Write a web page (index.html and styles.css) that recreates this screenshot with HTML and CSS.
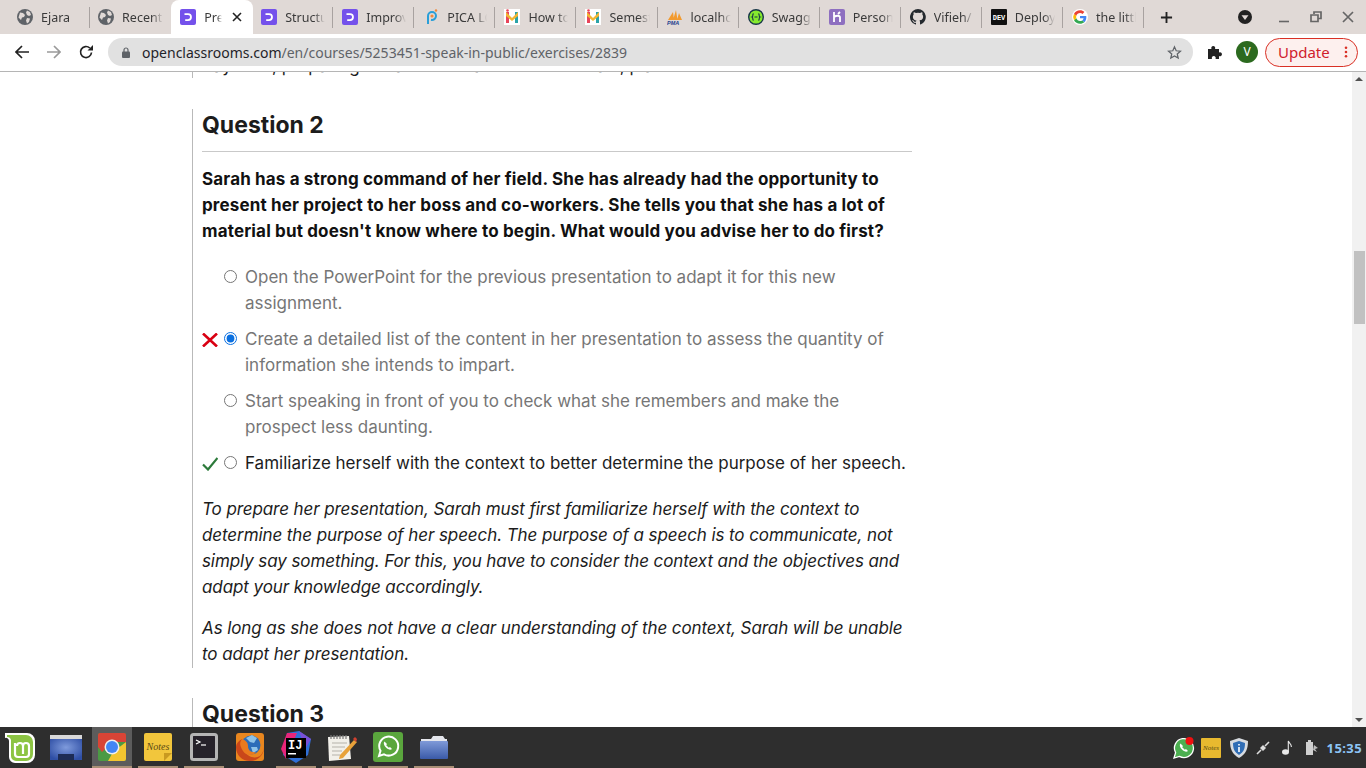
FILE: index.html
```html
<!DOCTYPE html>
<html lang="en">
<head>
    <meta charset="UTF-8" />
    <title>Speak in public - Exercises</title>
    <link rel="stylesheet" href="styles.css">
</head>
<body>
<svg class="sprite" width="0" height="0">
    <defs>
        <radialGradient id="desk-blue" cx="50%" cy="40%" r="65%">
            <stop offset="0" stop-color="#7f9bdc"/>
            <stop offset="1" stop-color="#2f4fa5"/>
        </radialGradient>
        <linearGradient id="folder-blue" x1="0" y1="0" x2="0" y2="1">
            <stop offset="0" stop-color="#7f9ad8"/>
            <stop offset="1" stop-color="#3a5aa8"/>
        </linearGradient>
    </defs>
    <symbol id="globe" viewBox="0 0 16 16">
        <circle cx="8" cy="8" r="8" fill="#5f6368"/>
        <path d="M3 3.500l3 .5 2 2-1 2-2 .5-1 2.500L1.500 8.500zM10 1.500l3 1.500 1 3-2 1-2-1-1-2.500zM10 9l3 .5-1 3.500-2 1.500-1-3z" fill="#e0d9d6"/>
    </symbol>
    <symbol id="oc" viewBox="0 0 16 16">
        <rect width="16" height="16" rx="2" fill="#7451eb"/>
        <path d="M4.500 4.200H8a3.900 3.900 0 0 1 0 7.800H5.200v-1.800H8a2.100 2.100 0 0 0 0-4.200H4.500z" fill="#fff"/>
    </symbol>
    <symbol id="mint" viewBox="0 0 16 16">
        <rect width="16" height="16" fill="#fff"/>
        <path d="M2 3v11h3V3z" fill="#e8445a"/>
        <path d="M11 3v11h3V3z" fill="#2aa3a8"/>
        <path d="M2 3l6 6 6-6v4l-6 5-6-5z" fill="#f2b632"/>
        <circle cx="3.500" cy="1.500" r="1.300" fill="#e8445a"/>
    </symbol>
</svg>

<header class="tab-strip">
    <div class="tab"><svg class="fav"><use href="#globe"/></svg><span class="tab-title">Ejara</span></div>
    <div class="tab"><svg class="fav"><use href="#globe"/></svg><span class="tab-title">Recent</span></div>
    <div class="tab active"><svg class="fav"><use href="#oc"/></svg><span class="tab-title">Pre</span>
        <svg class="tab-close" viewBox="0 0 10 10"><path d="M1 1l8 8M9 1l-8 8" stroke="#222" stroke-width="1.600"/></svg>
    </div>
    <div class="tab"><svg class="fav"><use href="#oc"/></svg><span class="tab-title">Structu</span></div>
    <div class="tab"><svg class="fav"><use href="#oc"/></svg><span class="tab-title">Improv</span></div>
    <div class="tab">
        <svg class="fav" viewBox="0 0 16 16"><path d="M5 15V7a4 4 0 0 1 8 0 4 4 0 0 1-5 3.800" fill="none" stroke="#2a9fd8" stroke-width="2"/><circle cx="9" cy="7" r="1.600" fill="#f08a3c"/><circle cx="13" cy="1.500" r="1.200" fill="#f08a3c"/></svg>
        <span class="tab-title">PICA LC</span>
    </div>
    <div class="tab"><svg class="fav"><use href="#mint"/></svg><span class="tab-title">How to</span></div>
    <div class="tab"><svg class="fav"><use href="#mint"/></svg><span class="tab-title">Semest</span></div>
    <div class="tab">
        <svg class="fav" viewBox="0 0 16 16"><path d="M1 11L6 3l1 8zM6 11l3-10 1.500 10zM10 11l2-7 3 7z" fill="#f29a2e"/><text x="0" y="15.500" class="pma">PMA</text></svg>
        <span class="tab-title">localhc</span>
    </div>
    <div class="tab">
        <svg class="fav" viewBox="0 0 16 16"><circle cx="8" cy="8" r="7.300" fill="#85ea2d" stroke="#173647" stroke-width="1.400"/><path d="M5.500 4.500C4 6 5.500 7.500 4 8c1.500.5 0 2 1.500 3.500M10.500 4.500C12 6 10.500 7.500 12 8c-1.500.5 0 2-1.500 3.500M6.500 8h3" fill="none" stroke="#173647" stroke-width="1.100"/></svg>
        <span class="tab-title">Swagg</span>
    </div>
    <div class="tab">
        <svg class="fav" viewBox="0 0 16 16"><rect width="16" height="16" rx="2" fill="#8e6fc0"/><path d="M5 3v10M5 8c2-1.500 6-2 6 .5V13M11 3L9 5" fill="none" stroke="#fff" stroke-width="1.800"/></svg>
        <span class="tab-title">Person</span>
    </div>
    <div class="tab">
        <svg class="fav" viewBox="0 0 16 16"><path d="M8 0a8 8 0 0 0-2.500 15.600c.4.100.5-.2.500-.4v-1.400c-2.200.5-2.700-1-2.700-1-.4-.9-.9-1.200-.9-1.200-.7-.5.100-.5.100-.5.800.100 1.200.8 1.200.8.700 1.200 1.900.9 2.300.7.100-.5.300-.9.500-1.100-1.800-.2-3.600-.9-3.600-4 0-.9.300-1.600.8-2.100-.1-.2-.4-1 .1-2.100 0 0 .7-.2 2.200.8a7.600 7.600 0 0 1 4 0c1.500-1 2.200-.8 2.200-.8.400 1.100.2 1.900.1 2.100.5.600.8 1.300.8 2.100 0 3.100-1.900 3.700-3.700 3.900.3.300.6.700.6 1.500v2.200c0 .2.100.5.600.4A8 8 0 0 0 8 0z" fill="#24292e"/></svg>
        <span class="tab-title">Vifieh/</span>
    </div>
    <div class="tab">
        <svg class="fav" viewBox="0 0 16 16"><rect width="16" height="16" rx="1" fill="#111"/><text x="8" y="11" class="dev">DEV</text></svg>
        <span class="tab-title">Deploy</span>
    </div>
    <div class="tab">
        <svg class="fav" viewBox="0 0 48 48"><circle cx="24" cy="24" r="24" fill="#fff"/><path d="M43 24.500c0-1.400-.1-2.500-.3-3.500H24v7h10.800c-.5 2.700-2 4.800-4.300 6.300l6.700 5.200C41.100 36 43 30.800 43 24.500z" fill="#4285f4"/><path d="M24 44c5.400 0 9.900-1.800 13.200-4.500l-6.700-5.200c-1.800 1.200-4 1.900-6.500 1.900-5.100 0-9.400-3.400-11-8.100l-6.900 5.300C9.400 39.500 16.200 44 24 44z" fill="#34a853"/><path d="M13 28.100a12 12 0 0 1 0-8.200l-6.900-5.300a20 20 0 0 0 0 18.800z" fill="#fbbc05"/><path d="M24 11.800c2.900 0 5.500 1 7.500 3l5.700-5.700C33.900 6.100 29.400 4 24 4 16.200 4 9.400 8.500 6.100 14.600l6.900 5.300c1.600-4.700 5.900-8.100 11-8.100z" fill="#ea4335"/></svg>
        <span class="tab-title">the littl</span>
    </div>
    <svg class="new-tab" viewBox="0 0 14 14"><path d="M7 1v12M1 7h12" stroke="#222" stroke-width="2"/></svg>
    <div class="window-controls">
        <svg class="profile-menu" viewBox="0 0 14 14"><circle cx="7" cy="7" r="7" fill="#222"/><path d="M3.500 5.200h7L7 10z" fill="#e0d9d6"/></svg>
        <svg class="win-btn" viewBox="0 0 12 12"><path d="M1 10.500h10" stroke="#666" stroke-width="1.600"/></svg>
        <svg class="win-btn" viewBox="0 0 12 12"><path d="M4 3V1h7v6.500H8.500M1 4h7v6.500H1z" fill="none" stroke="#666" stroke-width="1.700"/></svg>
        <svg class="win-btn" viewBox="0 0 12 12"><path d="M1 1l10 10M11 1L1 11" stroke="#666" stroke-width="1.700"/></svg>
    </div>
</header>

<nav class="toolbar">
    <svg class="nav-icon" viewBox="0 0 14 14"><path d="M14 7H1.500M7 1L1 7l6 6" fill="none" stroke="#222" stroke-width="1.700"/></svg>
    <svg class="nav-icon" viewBox="0 0 14 14"><path d="M0 7h12.500M7 1l6 6-6 6" fill="none" stroke="#9a9a9a" stroke-width="1.700"/></svg>
    <svg class="nav-icon" viewBox="0 0 14 14"><path d="M12.500 7.500A5.500 5.500 0 1 1 10.800 3" fill="none" stroke="#222" stroke-width="1.700"/><path d="M8.500 5.500H14V0z" fill="#222"/></svg>
    <div class="omnibox">
        <svg class="lock" viewBox="0 0 8 11"><path d="M2 5V3a2 2 0 0 1 4 0v2" fill="none" stroke="#5f6368" stroke-width="1.200"/><rect y="4.500" width="8" height="6.500" rx="1" fill="#5f6368"/></svg>
        <span class="url"><span class="host">openclassrooms.com</span>/en/courses/5253451-speak-in-public/exercises/2839</span>
        <svg class="star" viewBox="0 0 24 24"><path d="M12 3l2.700 6.200 6.800.6-5.100 4.500 1.500 6.600L12 17.400l-5.900 3.500 1.500-6.600L2.500 9.800l6.800-.6z" fill="none" stroke="#5f6368" stroke-width="2"/></svg>
    </div>
    <svg class="puzzle" viewBox="0 0 14 14"><path d="M0 4h3.500a2 2 0 1 1 3.500 0h4v3.500a2 2 0 1 1 0 3.500V14H7.500a2 2 0 1 0-3.500 0H0z" fill="#222"/></svg>
    <div class="avatar">V</div>
    <div class="update">
        <span class="update-label">Update</span>
        <svg class="update-dots" viewBox="0 0 4 14"><circle cx="2" cy="2" r="1.500"/><circle cx="2" cy="7" r="1.500"/><circle cx="2" cy="12" r="1.500"/></svg>
    </div>
</nav>

<div class="viewport">
    <main class="content">
        <div class="prev-line">
            <span>Say then, preparing the audience and the whole talk, plan.</span>
        </div>

        <section class="question">
            <h2>Question 2</h2>
            <p class="statement">Sarah has a strong command of her field. She has already had the opportunity to present her project to her boss and co-workers. She tells you that she has a lot of material but doesn't know where to begin. What would you advise her to do first?</p>

            <div class="options">
                <label class="option">
                    <span class="mark"></span>
                    <input type="radio" name="q2">
                    <span>Open the PowerPoint for the previous presentation to adapt it for this new assignment.</span>
                </label>
                <label class="option">
                    <span class="mark"><svg viewBox="0 0 16 14"><path d="M1 .5l14 13M15 .5l-14 13" stroke="#d90012" stroke-width="2.600"/></svg></span>
                    <input type="radio" name="q2" class="picked" checked>
                    <span>Create a detailed list of the content in her presentation to assess the quantity of information she intends to impart.</span>
                </label>
                <label class="option">
                    <span class="mark"></span>
                    <input type="radio" name="q2">
                    <span>Start speaking in front of you to check what she remembers and make the prospect less daunting.</span>
                </label>
                <label class="option correct">
                    <span class="mark"><svg viewBox="0 0 16 14"><path d="M1 7.500l5 5L15.500 1" fill="none" stroke="#2c7a3a" stroke-width="2.200"/></svg></span>
                    <input type="radio" name="q2">
                    <span>Familiarize herself with the context to better determine the purpose of her speech.</span>
                </label>
            </div>

            <div class="explanation">
                <p>To prepare her presentation, Sarah must first familiarize herself with the context to determine the purpose of her speech. The purpose of a speech is to communicate, not simply say something. For this, you have to consider the context and the objectives and adapt your knowledge accordingly.</p>
                <p>As long as she does not have a clear understanding of the context, Sarah will be unable to adapt her presentation.</p>
            </div>
        </section>

        <section class="question">
            <h2>Question 3</h2>
        </section>
    </main>

    <aside class="scrollbar">
        <span class="arrow up"></span>
        <span class="thumb"></span>
        <span class="arrow down"></span>
    </aside>
</div>

<footer class="taskbar">
    <svg class="menu-logo" viewBox="0 0 32 32">
        <path d="M1 1h22a8 8 0 0 1 8 8v14a8 8 0 0 1-8 8H11a6 6 0 0 1-6-6V9a3 3 0 0 0-4-3z" fill="#fff"/>
        <path d="M3 3h19a7 7 0 0 1 7 7v12a7 7 0 0 1-7 7H12a5 5 0 0 1-5-5V8a4 4 0 0 0-4-3z" fill="#8cc443"/>
        <path d="M11 11v11a3 3 0 0 0 3 3h8a3 3 0 0 0 3-3v-8a3 3 0 0 0-6 0v8M19 14a3 3 0 0 0-6 0" fill="none" stroke="#fff" stroke-width="2.200"/>
    </svg>
    <div class="launcher">
        <div class="launch">
            <svg class="wide" viewBox="0 0 32 28"><rect y="2" width="32" height="4" fill="#d8d8d8"/><rect y="6" width="32" height="21" fill="url(#desk-blue)"/><rect x="8" y="21" width="16" height="6" fill="#1d2c55"/></svg>
        </div>
        <div class="launch open current">
            <svg viewBox="0 0 28 28"><rect width="28" height="28" rx="2" fill="#4b9a44"/><path d="M28 4v22a2 2 0 0 1-2 2H10l5-9 13-10z" fill="#f2c530"/><path d="M0 2a2 2 0 0 1 2-2h24a2 2 0 0 1 2 2v7H14L4 19 0 14z" fill="#d94436"/><circle cx="14" cy="14" r="7.500" fill="#eee"/><circle cx="14" cy="14" r="6" fill="#4285f4"/></svg>
        </div>
        <div class="launch open">
            <svg viewBox="0 0 28 28"><rect width="28" height="28" rx="2" fill="#f2c63c"/><path d="M20 28l8-8h-8z" fill="#c99a20"/><text x="14" y="17" class="note-text">Notes</text></svg>
        </div>
        <div class="launch open">
            <svg viewBox="0 0 28 28"><rect x="1.500" y="1.500" width="25" height="25" rx="2" fill="#26222a" stroke="#b5b5b5" stroke-width="3"/><path d="M6 7l4 2-4 2" fill="none" stroke="#fff" stroke-width="1.200"/><path d="M11 12h5" stroke="#fff" stroke-width="1.200"/></svg>
        </div>
        <div class="launch">
            <svg viewBox="0 0 28 28"><rect width="28" height="28" rx="3" fill="#e9871f"/><path d="M0 14C0 22 6 28 14 28s14-6 14-14c0 3-2 7-4 9-5 3-13 1-15-5S8 8 6 6C2 8 0 11 0 14z" fill="#c9471a"/><circle cx="15" cy="12" r="9.500" fill="#2b6cb8"/><path d="M10 5l6-3 5 3-3 5-4-1zM15 14l6 0 1 3-5 3z" fill="#8ec3e8"/><path d="M6 6c3 1 6 3 6 7s3 7 8 6c-3 4-10 4-13-1S3 10 6 6z" fill="#ea7a1e"/></svg>
        </div>
        <div class="launch open">
            <svg class="tall" viewBox="0 0 32 32"><path d="M7 2l12-2 12 8-3 16-12 8-13-8z" fill="#2f6fd8"/><path d="M1 18L7 2h10L6 28z" fill="#e8257b"/><path d="M19 0l12 8-6 10z" fill="#7b4fd8"/><rect x="6" y="7" width="20" height="20" fill="#000"/><text x="8" y="18" class="ij-text">IJ</text><rect x="8" y="22" width="8" height="1.500" fill="#fff"/></svg>
        </div>
        <div class="launch open">
            <svg viewBox="0 0 30 28"><path d="M1 4l21-1 2 23-22 2z" fill="#f2f0ea"/><path d="M4 2v4M7 2v4M10 2v4M13 2v4M16 2v4M19 2v4" stroke="#777" stroke-width="1.200"/><path d="M5 10h15M5 14h13M5 18h10M5 22h8" stroke="#b5b2aa"/><path d="M13 22l14-15 3 2-14 16-4 1z" fill="#e8a23a"/><path d="M26 6l2-2 2 2-1 3z" fill="#d0402f"/></svg>
        </div>
        <div class="launch open">
            <svg class="square" viewBox="0 0 30 30"><rect width="30" height="30" rx="3" fill="#5aa63d"/><path d="M6 24l1.500-5.200A9.500 9.500 0 1 1 11 22.300z" fill="none" stroke="#fff" stroke-width="2"/><path d="M11.500 9.500c-1.500 1.500-.5 4 1.500 6s4.500 3 6 1.500l-2-2-1.200.8-2.600-2.600.8-1.200z" fill="#fff"/></svg>
        </div>
        <div class="launch open">
            <svg viewBox="0 0 30 26"><path d="M2 5h10l2-3h10l2 3h2v6H2z" fill="#e4e6ec"/><rect x="1" y="7" width="28" height="18" rx="1" fill="url(#folder-blue)"/></svg>
        </div>
    </div>
    <div class="tray">
        <svg class="tray-wa" viewBox="0 0 22 22"><path d="M1 21l1.600-5.400A9.500 9.500 0 1 1 6.400 19.400z" fill="#4caf50" stroke="#fff" stroke-width="1.300"/><path d="M7.500 6.500c-1.500 1.500-.5 4 1.500 6s4.500 3 6 1.500l-2-2-1.200.8-2.600-2.600.8-1.200z" fill="#fff"/><circle cx="16.500" cy="4" r="4" fill="#f01010"/></svg>
        <svg class="tray-notes" viewBox="0 0 20 20"><rect width="20" height="20" rx="1" fill="#e8b92f"/><text x="10" y="12" class="tray-note-text">Notes</text></svg>
        <svg class="tray-shield" viewBox="0 0 18 20"><path d="M9 0l9 3c0 8-2 13-9 17C2 16 0 11 0 3z" fill="#d7dbe0"/><path d="M9 3l6 2c0 6-1.500 9-6 12-4.500-3-6-6-6-12z" fill="#2f6db5"/><path d="M9 6v1.500M9 9v5" stroke="#fff" stroke-width="1.600"/></svg>
        <svg class="tray-plug" viewBox="0 0 14 14"><path d="M1 13l4-4M9 5l4-4" stroke="#ddd" stroke-width="1.600"/><path d="M4 7l3-3 3 3-3 3z" fill="#ddd"/></svg>
        <svg class="tray-music" viewBox="0 0 10 15"><ellipse cx="3.500" cy="12" rx="3.500" ry="2.800" fill="#e8e8e8"/><path d="M6.300 12V1c.5 2 3.500 3 3 6" fill="none" stroke="#e8e8e8" stroke-width="1.100"/></svg>
        <svg class="tray-battery" viewBox="0 0 14 15"><path d="M2 2h2V0h3v2h2v13H2z" fill="#cfcfcf"/><path d="M10 5l4 3-3 1 2 3-4-2z" fill="#bdbdbd"/></svg>
        <span class="clock">15:35</span>
    </div>
</footer>
</body>
</html>
```

FILE: styles.css
```css
html, body {
    margin: 0;
    height: 100%;
    overflow: hidden;
}

body {
    display: flex;
    flex-direction: column;
    background: #fff;
    color: #1c1c1c;
    font-family: 'Inter', 'Liberation Sans', sans-serif;
}

.sprite {
    position: absolute;
}

/* Browser tabs */
.tab-strip {
    display: flex;
    align-items: center;
    height: 34px;
    padding-left: 9px;
    background: #e0d9d6;
    flex: none;
}

.tab {
    position: relative;
    display: flex;
    align-items: center;
    width: 81.08px;
    height: 34px;
    padding-left: 9px;
    box-sizing: border-box;
    border-right: 1px solid #a8a2a0;
    font-family: 'Noto Sans', sans-serif;
    font-size: 12.500px;
    color: #3a3a3a;
}

.tab:first-child {
    padding-left: 8px;
}

.tab.active {
    width: 82px;
    margin-right: -1px;
    background: #fff;
    border-right: none;
    border-radius: 8px 8px 0 0;
    z-index: 1;
}

.tab:not(.active) {
    border-image: linear-gradient(to bottom, transparent 8px, #a8a2a0 8px, #a8a2a0 27px, transparent 27px) 1;
}

.tab:nth-child(2) {
    padding-left: 8px;
    border-image: none;
    border-right-color: transparent;
}

.fav {
    width: 16px;
    height: 16px;
    flex: none;
    margin-right: 8px;
}

.tab-title {
    white-space: nowrap;
    overflow: hidden;
    flex: 1;
    margin-right: 7px;
    -webkit-mask-image: linear-gradient(to right, #000 72%, transparent 100%);
    mask-image: linear-gradient(to right, #000 72%, transparent 100%);
}

.tab.active .tab-title {
    margin-right: 10px;
}

.tab-close {
    width: 10px;
    height: 10px;
    flex: none;
    margin-right: 11px;
}

.new-tab {
    width: 13px;
    height: 13px;
    margin-left: 16px;
    flex: none;
}

.window-controls {
    display: flex;
    align-items: center;
    margin-left: auto;
    margin-right: 12px;
}

.profile-menu {
    width: 14px;
    height: 14px;
    margin-right: 26px;
}

.win-btn {
    width: 12px;
    height: 12px;
    margin-left: 20px;
}

.win-btn:nth-child(2) {
    margin-left: 0;
}

/* Address bar */
.toolbar {
    display: flex;
    align-items: center;
    height: 36px;
    padding: 0 8px 1px 15px;
    border-bottom: 1px solid #b5b5b5;
    background: #fff;
    flex: none;
}

.nav-icon {
    width: 14px;
    height: 14px;
    margin-right: 18px;
    flex: none;
}

.omnibox {
    display: flex;
    align-items: center;
    width: 1085px;
    height: 28px;
    margin-left: -3px;
    padding: 0 11px 0 14px;
    box-sizing: border-box;
    border-radius: 14px;
    background: #e1e1e1;
    font-family: 'Noto Sans', sans-serif;
    font-size: 14px;
    color: #5f6368;
    flex: none;
}

.lock {
    width: 8px;
    height: 11px;
    margin-right: 12px;
}

.host {
    color: #1f2429;
}

.star {
    width: 15px;
    height: 15px;
    margin-left: auto;
}

.puzzle {
    width: 14px;
    height: 14px;
    margin-left: 15px;
    flex: none;
}

.avatar {
    width: 22px;
    height: 22px;
    margin-left: 14px;
    border-radius: 50%;
    background: #2c6a1f;
    color: #fff;
    font-family: 'Noto Sans', sans-serif;
    font-size: 12px;
    line-height: 22px;
    text-align: center;
    flex: none;
}

.update {
    display: flex;
    align-items: center;
    width: 93px;
    height: 29px;
    margin-left: 7px;
    padding-left: 12px;
    box-sizing: border-box;
    border: 1px solid #d93025;
    border-radius: 15px;
    background: #fdf0ee;
    color: #d0202c;
    font-family: 'Noto Sans', sans-serif;
    font-size: 15px;
    flex: none;
}

.update-label {
    padding-bottom: 1px;
}

.update-dots {
    width: 4px;
    height: 12px;
    margin-left: 14px;
    fill: #d93025;
}

/* Page area */
.viewport {
    display: flex;
    flex: 1;
    min-height: 0;
}

.content {
    flex: 1;
    overflow: hidden;
    padding-left: 192px;
}

.prev-line {
    display: flex;
    align-items: flex-start;
    width: 710px;
    height: 6px;
    margin-bottom: 31px;
    padding-left: 9px;
    border-left: 1px solid #b9b9b9;
    overflow: hidden;
    font-size: 17px;
    line-height: 20px;
    white-space: nowrap;
}

.prev-line span {
    margin-top: -16px;
}

.question {
    width: 710px;
    padding-left: 9px;
    margin-bottom: 30px;
    border-left: 1px solid #b9b9b9;
    font-size: 17px;
    line-height: 26px;
}

h2 {
    margin: 0 0 14px;
    padding: 1px 0 11px;
    border-bottom: 1px solid #c9c9c9;
    font-size: 23px;
    font-weight: 700;
    line-height: 30px;
    color: #1c1c1c;
}

.statement {
    margin: 0 0 20px;
    font-weight: 700;
    letter-spacing: 0.15px;
    color: #111;
}

.options {
    display: flex;
    flex-direction: column;
    gap: 10px;
    margin-bottom: 20px;
}

.option {
    display: grid;
    grid-template-columns: 22px 13px 1fr;
    column-gap: 0;
    color: #767676;
}

.option > span:last-child {
    margin-left: 8px;
}

.option.correct {
    color: #1c1c1c;
}

.option input {
    width: 13px;
    height: 13px;
    margin: 0;
    margin-top: 6px;
}

.picked {
    accent-color: #0a6fe0;
}

.mark svg {
    display: block;
    width: 16px;
    height: 14px;
    margin-top: 7px;
}

.explanation {
    font-style: italic;
    letter-spacing: -0.09px;
    color: #1c1c1c;
}

.explanation p {
    margin: 0 0 15px;
}

.explanation p:last-child {
    margin-bottom: 0;
    padding-bottom: 1px;
}

/* Fake scrollbar */
.scrollbar {
    position: relative;
    width: 14px;
    background: #f1f1f1;
    flex: none;
}

.thumb {
    position: absolute;
    top: 179px;
    left: 2px;
    width: 11px;
    height: 73px;
    background: #c1c1c1;
}

.arrow {
    position: absolute;
    left: 3px;
    border-left: 4px solid transparent;
    border-right: 4px solid transparent;
}

.arrow.up {
    top: 5px;
    border-bottom: 4px solid #505050;
}

.arrow.down {
    bottom: 5px;
    border-top: 4px solid #505050;
}

/* Desktop panel */
.taskbar {
    display: flex;
    align-items: center;
    height: 41px;
    background: #2e2e2e;
    flex: none;
}

.menu-logo {
    width: 32px;
    height: 32px;
    margin-left: 4px;
    flex: none;
}

.launcher {
    display: flex;
    gap: 6px;
    margin-left: 10px;
    align-self: stretch;
}

.launch {
    display: flex;
    align-items: center;
    justify-content: center;
    width: 40px;
    box-sizing: border-box;
    padding-top: 1px;
    border-bottom: 2px solid transparent;
}

.launch svg {
    width: 30px;
    height: 28px;
}

.launch svg.wide {
    width: 32px;
}

.launch svg.tall {
    width: 32px;
    height: 32px;
}

.launch svg.square {
    width: 30px;
    height: 30px;
}

.launch.open {
    border-bottom-color: #a98f76;
}

.launch.current {
    background: #5c5c5c;
}

.pma {
    font-family: 'Liberation Sans', sans-serif;
    font-size: 5.500px;
    font-weight: 700;
    font-style: italic;
    fill: #23408e;
}

.dev {
    font-family: 'Liberation Mono', monospace;
    font-size: 7px;
    font-weight: 700;
    fill: #fff;
    text-anchor: middle;
}

.note-text {
    font-family: 'Liberation Serif', serif;
    font-size: 10px;
    font-style: italic;
    fill: #5a4a14;
    text-anchor: middle;
}

.tray-note-text {
    font-family: 'Liberation Serif', serif;
    font-size: 7px;
    font-style: italic;
    fill: #5a4a14;
    text-anchor: middle;
}

.ij-text {
    font-family: 'Liberation Mono', monospace;
    font-size: 12px;
    font-weight: 700;
    fill: #fff;
}

.tray {
    display: flex;
    align-items: center;
    margin-left: auto;
    padding-right: 4px;
}

.tray-wa {
    width: 22px;
    height: 22px;
}

.tray-notes {
    width: 20px;
    height: 20px;
    margin-left: 6px;
}

.tray-shield {
    width: 18px;
    height: 20px;
    margin-left: 9px;
}

.tray-plug {
    width: 14px;
    height: 14px;
    margin-left: 8px;
}

.tray-music {
    width: 10px;
    height: 15px;
    margin-left: 12px;
}

.tray-battery {
    width: 14px;
    height: 15px;
    margin-left: 12px;
}

.clock {
    margin-left: 9px;
    font-family: 'Noto Sans', sans-serif;
    font-size: 13px;
    font-weight: 700;
    letter-spacing: 0.4px;
    color: #8cc4f5;
}
```
